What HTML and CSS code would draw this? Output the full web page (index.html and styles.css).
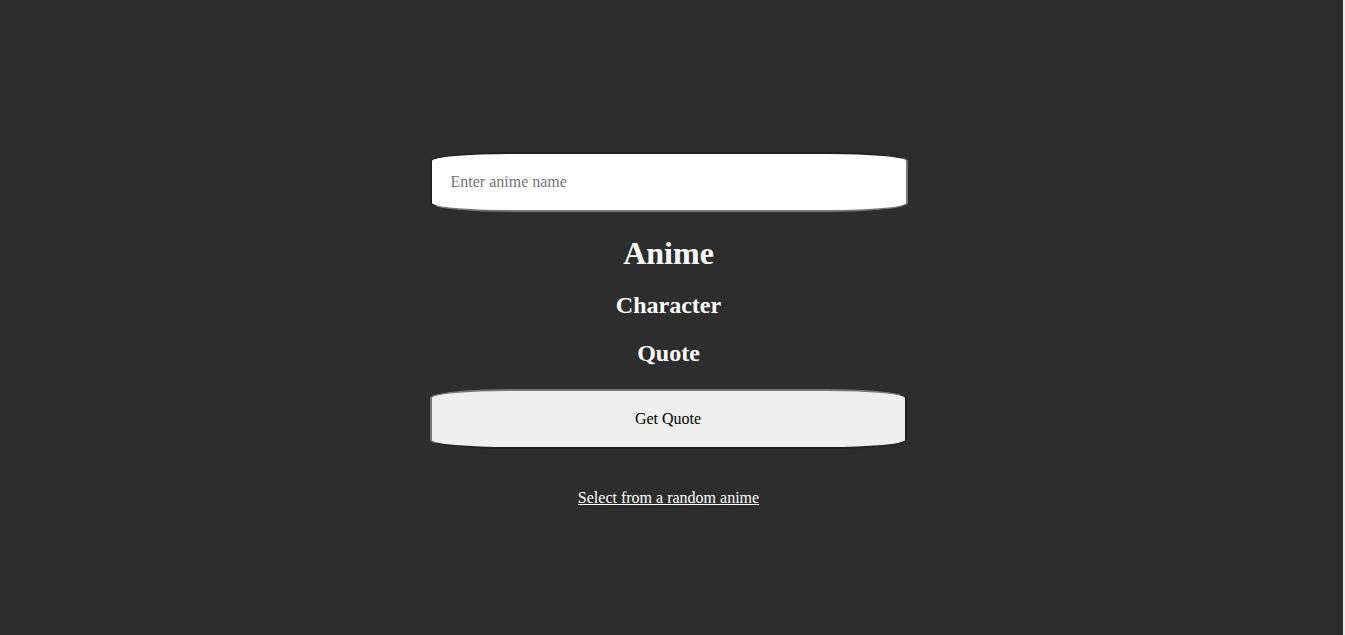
FILE: index.html
```html
<!DOCTYPE html>
<html lang="en">
<head>
<meta charset="utf-8">
<title>Anime Quotes</title>
<link rel="stylesheet" href="styles.css">
</head>
<body>
<div class="page">
  <main class="app">
    <input class="search" type="text" placeholder="Enter anime name">
    <h1 class="anime">Anime</h1>
    <h2 class="character">Character</h2>
    <h2 class="quote">Quote</h2>
    <button class="get-btn" type="button">Get Quote</button>
    <p class="random"><a href="#">Select from a random anime</a></p>
  </main>
</div>
</body>
</html>
```
FILE: styles.css
```css
html {
  background: #ececec;
}
body {
  margin: 0;
  font-family: "Liberation Serif", "Times New Roman", serif;
}
.page {
  margin-right: 2px;
  min-height: 635px;
  background: #2d2d2d;
  padding-top: 152px;
  box-sizing: border-box;
}
.app {
  width: 478px;
  margin: 0 auto;
  text-align: center;
  color: #fff;
  position: relative;
  left: -3px;
}
.search {
  display: block;
  box-sizing: border-box;
  width: 478px;
  height: 60px;
  margin: 0;
  padding: 0 19px;
  border: 2px inset #767676;
  border-radius: 80px / 9px;
  background: #fff;
  font-family: "Liberation Serif", "Times New Roman", serif;
  font-size: 16px;
  color: #000;
  outline: none;
}
.search::placeholder {
  color: #757575;
}
.anime {
  font-size: 32px;
  margin: 22.5px 0 20.5px;
}
.character,
.quote {
  font-size: 24px;
  margin: 19.92px 0;
}
.character {
  margin-bottom: 20.92px;
}
.quote {
  margin-bottom: 22px;
}
.get-btn {
  display: block;
  box-sizing: border-box;
  width: 477px;
  height: 60px;
  margin: 0;
  border: 2px outset #767676;
  border-radius: 80px / 9px;
  background: #efefef;
  font-family: "Liberation Serif", "Times New Roman", serif;
  font-size: 16px;
  color: #000;
}
.random {
  margin: 40px 0 0;
  font-size: 16px;
}
.random a {
  color: #fff;
}
```
